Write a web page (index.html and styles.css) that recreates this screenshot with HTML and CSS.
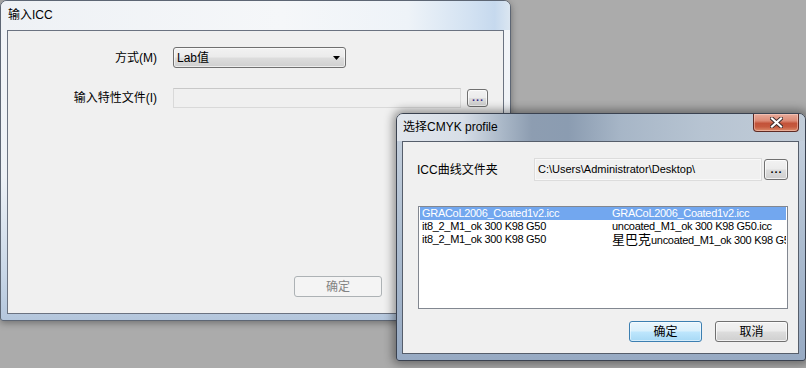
FILE: index.html
```html
<!DOCTYPE html>
<html>
<head>
<meta charset="utf-8">
<link rel="stylesheet" href="styles.css">
</head>
<body>
<div class="desktop">
  <div class="win win-back">
    <div class="titlebar tb-back"><span class="title">输入ICC</span></div>
    <div class="client">
      <div class="form-row row-mode">
        <span class="lbl">方式(M)</span>
        <div class="combo">
          <span class="combo-text">Lab值</span>
          <svg class="combo-arrow" width="7" height="4" viewBox="0 0 7 4"><path d="M0 0H7L3.5 4Z" fill="#000"/></svg>
        </div>
      </div>
      <div class="form-row row-file">
        <span class="lbl">输入特性文件(I)</span>
        <div class="field field-disabled"></div>
        <div class="btn btn-dots btn-dots-back">...</div>
      </div>
      <div class="footer-back">
        <div class="btn btn-disabled">确定</div>
      </div>
    </div>
  </div>

  <div class="win win-front">
    <div class="titlebar tb-front">
      <span class="title">选择CMYK profile</span>
      <div class="close-btn">
        <svg width="13" height="11" viewBox="0 0 13 11"><path d="M2 1.5L11 9.5M11 1.5L2 9.5" stroke="#3a2a2a" stroke-width="4" stroke-linecap="square"/><path d="M2 1.5L11 9.5M11 1.5L2 9.5" stroke="#fff" stroke-width="2.2" stroke-linecap="square"/></svg>
      </div>
    </div>
    <div class="client client-front">
      <div class="folder-row">
        <span class="folder-lbl">ICC曲线文件夹</span>
        <div class="field path-field">C:\Users\Administrator\Desktop\</div>
        <div class="btn btn-dots btn-dots-front">...</div>
      </div>
      <div class="listbox">
        <div class="lrow sel"><span class="c1">GRACoL2006_Coated1v2.icc</span><span class="c2">GRACoL2006_Coated1v2.icc</span></div>
        <div class="lrow"><span class="c1">it8_2_M1_ok 300 K98 G50</span><span class="c2">uncoated_M1_ok 300 K98 G50.icc</span></div>
        <div class="lrow"><span class="c1">it8_2_M1_ok 300 K98 G50</span><span class="c2"><span class="cjk">星巴克</span>uncoated_M1_ok 300 K98 G50.icc</span></div>
      </div>
      <div class="footer-front">
        <div class="btn btn-default">确定</div>
        <div class="btn">取消</div>
      </div>
    </div>
  </div>
</div>
</body>
</html>
```

FILE: styles.css
```css
html, body {
  margin: 0;
  padding: 0;
}
body {
  background: #ababab;
  font-family: "Liberation Sans", "Noto Sans CJK SC", sans-serif;
  font-size: 12px;
  color: #000;
}
.desktop {
  position: relative;
  width: 806px;
  height: 368px;
  overflow: hidden;
}
.win {
  position: absolute;
  box-sizing: border-box;
  display: flex;
  flex-direction: column;
  border-radius: 7px 7px 3px 3px;
}
.win-back {
  left: 0;
  top: 0;
  width: 511px;
  height: 321px;
  border: 1px solid #5d6674;
  padding: 0 6px 6px 6px;
  background: linear-gradient(to bottom, #f3f5f8 0%, #edf1f6 55%, #c9d7e7 85%, #b4c6dc 100%);
  box-shadow: 0 2px 7px rgba(0,0,0,0.35);
}
.win-front {
  left: 396px;
  top: 113px;
  width: 410px;
  height: 248px;
  border: 1px solid #3a4250;
  padding: 0 6px 6px 5px;
  background: linear-gradient(to bottom, #c9d3df 0%, #adbdd0 50%, #97aac3 100%);
  box-shadow: 0 0 10px 3px rgba(0,0,0,0.4);
}
.titlebar {
  display: flex;
  align-items: flex-start;
  flex: none;
  border-radius: 6px 6px 0 0;
}
.tb-back {
  height: 29px;
  margin: 0 -6px;
  padding-left: 7px;
  background: linear-gradient(90deg, #eef1f5 0%, #f5f7f9 55%, #eef3f8 80%, #d3e2f2 92%, #c6d9ee 97%, #dbe6f1 100%);
}
.tb-front {
  height: 27px;
  margin: 0 -6px 0 -5px;
  padding-left: 6px;
  padding-right: 6px;
  background: linear-gradient(90deg, #e1e6ed 0%, #d7dee7 16%, #a9b7c7 26%, #8d9db1 33%, #8b9cb1 42%, #a7b6c7 55%, #b7c4d2 75%, #c1ccd8 100%);
}
.title {
  line-height: 29px;
  white-space: nowrap;
}
.tb-front .title {
  line-height: 27px;
}
.close-btn {
  margin-left: auto;
  width: 46px;
  height: 18px;
  box-sizing: border-box;
  border: 1px solid #5e2a24;
  border-top: none;
  border-radius: 0 0 4px 4px;
  background: linear-gradient(to bottom, #e8ab9b 0%, #dc8a75 40%, #c3533a 55%, #c65a3f 75%, #dc8d6c 100%);
  box-shadow: inset 0 0 0 1px rgba(255,220,210,0.45);
  display: flex;
  align-items: center;
  justify-content: center;
}
.client {
  flex: 1;
  display: flex;
  flex-direction: column;
  background: #f0f0f0;
  border: 1px solid #6b7381;
}
.client-front {
  border-color: #565e6b;
}
.form-row {
  display: flex;
  align-items: center;
}
.row-mode {
  margin-top: 16px;
  height: 21px;
}
.row-file {
  margin-top: 20px;
  height: 20px;
}
.lbl {
  width: 149px;
  margin-right: 16px;
  text-align: right;
  line-height: 16px;
  white-space: nowrap;
}
.combo {
  width: 173px;
  height: 21px;
  box-sizing: border-box;
  border: 1px solid #707070;
  border-radius: 3px;
  background: linear-gradient(to bottom, #f2f2f2 0%, #ebebeb 48%, #dddddd 52%, #cfcfcf 100%);
  box-shadow: inset 0 0 0 1px rgba(255,255,255,0.6);
  display: flex;
  align-items: center;
  padding: 0 5px 0 3px;
}
.combo-text {
  flex: 1;
  line-height: 16px;
}
.field {
  box-sizing: border-box;
  background: #f0f0f0;
}
.field-disabled {
  width: 288px;
  height: 20px;
  border: 1px solid #d9d9d9;
  border-top-color: #c8c8c8;
}
.btn {
  box-sizing: border-box;
  width: 73px;
  height: 21px;
  border: 1px solid #707070;
  border-radius: 3px;
  background: linear-gradient(to bottom, #f2f2f2 0%, #ebebeb 48%, #dddddd 52%, #cfcfcf 100%);
  box-shadow: inset 0 0 0 1px rgba(255,255,255,0.7);
  display: flex;
  align-items: center;
  justify-content: center;
  line-height: 16px;
  white-space: nowrap;
}
.btn-dots {
  font-size: 11px;
  font-weight: bold;
  letter-spacing: 1px;
  padding-left: 1px;
  line-height: 10px;
  align-items: flex-end;
  padding-bottom: 4px;
}
.btn-dots-back {
  width: 21px;
  height: 18px;
  margin-left: 6px;
  color: #3b2d88;
}
.btn-dots-front {
  width: 24px;
  height: 21px;
  margin-left: 2px;
  padding-bottom: 5px;
}
.footer-back {
  margin-top: auto;
  margin-left: 286px;
  padding-bottom: 16px;
  display: flex;
}
.btn-disabled {
  width: 88px;
  border-color: #adb2b5;
  background: #f4f4f4;
  box-shadow: none;
  color: #838383;
}
.folder-row {
  display: flex;
  align-items: center;
  margin-top: 16px;
  height: 23px;
}
.folder-lbl {
  width: 117px;
  padding-left: 14px;
  line-height: 16px;
  white-space: nowrap;
}
.path-field {
  width: 228px;
  height: 23px;
  border: 1px solid #dcdcdc;
  box-shadow: inset 0 0 0 1px #f8f8f8;
  padding-left: 3px;
  font-size: 11px;
  line-height: 21px;
  white-space: nowrap;
  overflow: hidden;
}
.listbox {
  margin-top: 25px;
  margin-left: 15px;
  width: 370px;
  height: 103px;
  box-sizing: border-box;
  border: 1px solid #828790;
  background: #fff;
  padding: 0 1px;
  font-size: 11px;
  letter-spacing: -0.3px;
}
.lrow {
  display: flex;
  height: 13px;
  line-height: 13px;
  white-space: nowrap;
  overflow: hidden;
}
.lrow.sel {
  background: #72a7ef;
  color: #fff;
}
.c1 {
  width: 190px;
  padding-left: 2px;
  flex: none;
  overflow: hidden;
}
.c2 {
  flex: 1;
  overflow: hidden;
  white-space: nowrap;
}
.cjk {
  font-size: 13px;
  letter-spacing: 0;
}
.footer-front {
  margin-top: 12px;
  display: flex;
  justify-content: flex-end;
  gap: 13px;
  padding-right: 10px;
}
.btn-default {
  border-color: #3c7fb1;
  background: linear-gradient(to bottom, #eaf6fd 0%, #d9f0fc 48%, #bee6fd 52%, #a7d9f5 100%);
  box-shadow: inset 0 0 0 1px rgba(255,255,255,0.5);
}
```
